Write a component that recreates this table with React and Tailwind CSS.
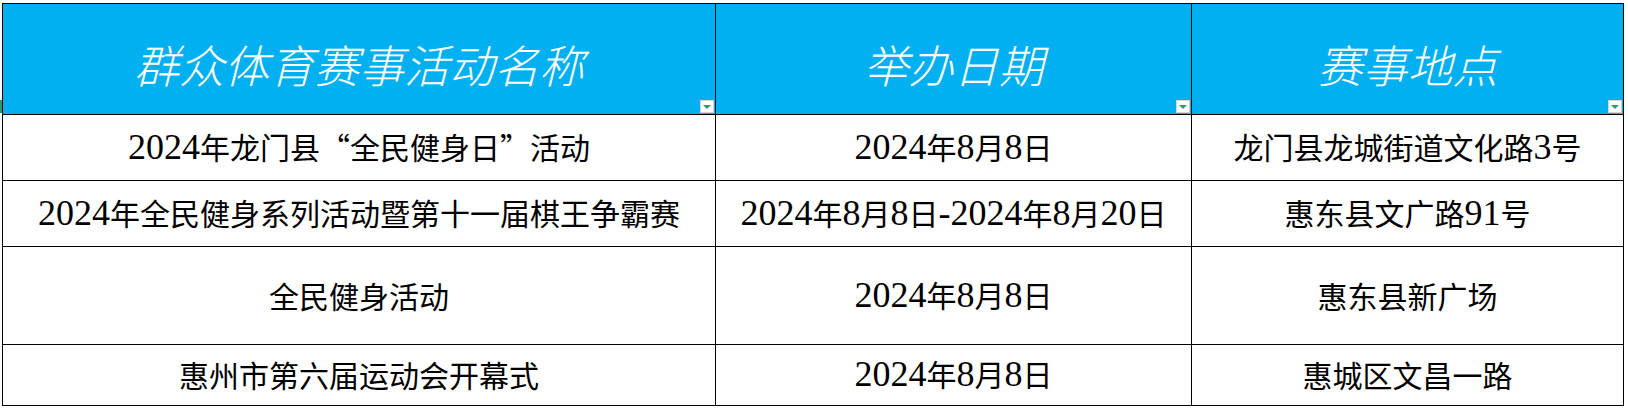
const rows = [
  {
    name: "2024年龙门县“全民健身日”活动",
    date: "2024年8月8日",
    place: "龙门县龙城街道文化路3号",
    h: "h-[65px]",
  },
  {
    name: "2024年全民健身系列活动暨第十一届棋王争霸赛",
    date: "2024年8月8日-2024年8月20日",
    place: "惠东县文广路91号",
    h: "h-[65px]",
  },
  {
    name: "全民健身活动",
    date: "2024年8月8日",
    place: "惠东县新广场",
    h: "h-[97px]",
  },
  {
    name: "惠州市第六届运动会开幕式",
    date: "2024年8月8日",
    place: "惠城区文昌一路",
    h: "h-[60px]",
  },
];

// digits in the sheet are tall serif figures, CJK uses the sans CJK face
function Txt({ text }) {
  const parts = text.split(/([0-9\-]+)/).filter(Boolean);
  return parts.map((p, i) => {
    if (/^[0-9\-]+$/.test(p)) {
      return (
        <span key={i} className="font-['Liberation_Serif',serif] text-[36px]">
          {p}
        </span>
      );
    }
    return <span key={i}>{p}</span>;
  });
}

function FilterButton() {
  return (
    <span className="absolute right-[1px] bottom-[1px] w-[14px] h-[13px] bg-white border border-[#d4d4d4] flex items-center justify-center">
      <span className="w-0 h-0 border-l-[4px] border-r-[4px] border-t-[4px] border-l-transparent border-r-transparent border-t-[#2e9a6a]" />
    </span>
  );
}

function HeadCell({ children }) {
  return (
    <div className="relative h-[110px] bg-[#00b0f0] flex items-center justify-center pt-[8px]">
      <span className="text-white italic text-[45px] leading-none font-['Noto_Sans_CJK_SC',sans-serif] font-light">
        {children}
      </span>
      <FilterButton />
    </div>
  );
}

function Cell({ text, h }) {
  return (
    <div className={`${h} bg-white flex items-center justify-center whitespace-nowrap text-[30px] leading-none text-black font-['Noto_Sans_CJK_SC',sans-serif]`}>
      <span className="leading-none pb-[2px]">
        <Txt text={text} />
      </span>
    </div>
  );
}

export default function App() {
  return (
    <div className="relative w-[1628px] h-[410px] bg-white pt-[3px] pl-[2px]">
      {/* row selector sliver */}
      <div className="absolute left-0 top-[100px] w-[2px] h-[13px] bg-[#1f9e6e]" />

      <div className="w-[1622px] grid grid-cols-[712px_475px_431px] gap-px p-px bg-black">
        <HeadCell>群众体育赛事活动名称</HeadCell>
        <HeadCell>举办日期</HeadCell>
        <HeadCell>赛事地点</HeadCell>

        {rows.map((r, i) => (
          <div key={i} className="contents">
            <Cell h={r.h} text={r.name} />
            <Cell h={r.h} text={r.date} />
            <Cell h={r.h} text={r.place} />
          </div>
        ))}
      </div>
    </div>
  );
}
